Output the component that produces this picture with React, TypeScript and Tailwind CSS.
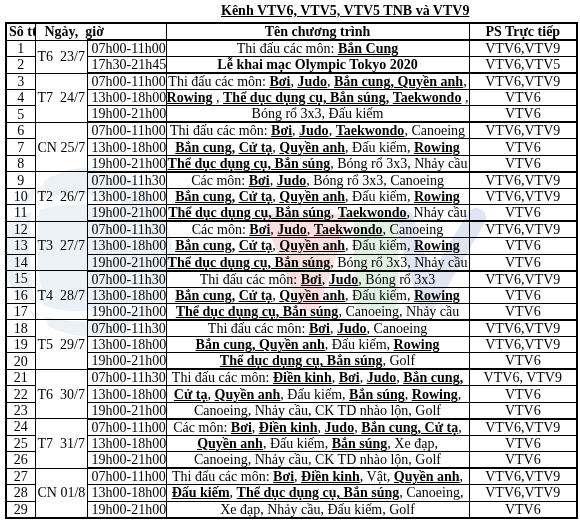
import React from 'react';

type Row = { time: string; prog: string; ps: string };

const groups: { date: string; rows: Row[] }[] = [
  {
    date: 'T6  23/7',
    rows: [
      { time: '07h00-11h00', prog: 'Thi đấu các môn: [Bắn Cung]', ps: 'VTV6,VTV9' },
      { time: '17h30-21h45', prog: '{Lễ khai mạc Olympic Tokyo 2020}', ps: 'VTV6,VTV5' },
    ],
  },
  {
    date: 'T7  24/7',
    rows: [
      { time: '07h00-11h00', prog: 'Thi đấu các môn: [Bơi], [Judo], [Bắn cung, Quyền anh],', ps: 'VTV6,VTV9' },
      { time: '13h00-18h00', prog: '[Rowing] , [Thể dục dụng cụ, Bắn súng,] [Taekwondo] ,', ps: 'VTV6' },
      { time: '19h00-21h00', prog: 'Bóng rổ 3x3, Đấu kiếm', ps: 'VTV6' },
    ],
  },
  {
    date: 'CN 25/7',
    rows: [
      { time: '07h00-11h00', prog: 'Thi đấu các môn: [Bơi], [Judo], [Taekwondo], Canoeing', ps: 'VTV6,VTV9' },
      { time: '13h00-18h00', prog: '[Bắn cung]{,} [Cử tạ], [Quyền anh], Đấu kiếm, [Rowing]', ps: 'VTV6' },
      { time: '19h00-21h00', prog: '[Thể dục dụng cụ, Bắn súng], Bóng rổ 3x3, Nhảy cầu', ps: 'VTV6' },
    ],
  },
  {
    date: 'T2  26/7',
    rows: [
      { time: '07h00-11h30', prog: 'Các môn: [Bơi], [Judo], Bóng rổ 3x3, Canoeing', ps: 'VTV6,VTV9' },
      { time: '13h00-18h00', prog: '[Bắn cung]{,} [Cử tạ], [Quyền anh], Đấu kiếm, [Rowing]', ps: 'VTV6,VTV9' },
      { time: '19h00-21h00', prog: '[Thể dục dụng cụ, Bắn súng], [Taekwondo], Nhảy cầu', ps: 'VTV6' },
    ],
  },
  {
    date: 'T3  27/7',
    rows: [
      { time: '07h00-11h30', prog: 'Các môn: [Bơi], [Judo], [Taekwondo], Canoeing', ps: 'VTV6,VTV9' },
      { time: '13h00-18h00', prog: '[Bắn cung]{,} [Cử tạ], [Quyền anh], Đấu kiếm, [Rowing]', ps: 'VTV6' },
      { time: '19h00-21h00', prog: '[Thể dục dụng cụ, Bắn súng], Bóng rổ 3x3, Nhảy cầu', ps: 'VTV6' },
    ],
  },
  {
    date: 'T4  28/7',
    rows: [
      { time: '07h00-11h30', prog: 'Thi đấu các môn: [Bơi], [Judo], Bóng rổ 3x3', ps: 'VTV6,VTV9' },
      { time: '13h00-18h00', prog: '[Bắn cung]{,} [Cử tạ], [Quyền anh], Đấu kiếm, [Rowing]', ps: 'VTV6' },
      { time: '19h00-21h00', prog: '[Thể dục dụng cụ, Bắn súng], Canoeing, Nhảy cầu', ps: 'VTV6' },
    ],
  },
  {
    date: 'T5  29/7',
    rows: [
      { time: '07h00-11h30', prog: 'Thi đấu các môn: [Bơi], [Judo], Canoeing', ps: 'VTV6,VTV9' },
      { time: '13h00-18h00', prog: '[Bắn cung, Quyền anh], Đấu kiếm, [Rowing]', ps: 'VTV6,VTV9' },
      { time: '19h00-21h00', prog: '[Thể dục dụng cụ, Bắn súng], Golf', ps: 'VTV6' },
    ],
  },
  {
    date: 'T6  30/7',
    rows: [
      { time: '07h00-11h30', prog: 'Thi đấu các môn: [Điền kinh], [Bơi], [Judo], [Bắn cung]{,}', ps: 'VTV6, VTV9' },
      { time: '13h00-18h00', prog: '[Cử tạ], [Quyền anh], Đấu kiếm, [Bắn súng], [Rowing],', ps: 'VTV6' },
      { time: '19h00-21h00', prog: 'Canoeing, Nhảy cầu, CK TD nhào lộn, Golf', ps: 'VTV6' },
    ],
  },
  {
    date: 'T7  31/7',
    rows: [
      { time: '07h00-11h00', prog: 'Các môn: [Bơi], [Điền kinh], [Judo], [Bắn cung, Cử tạ],', ps: 'VTV6,VTV9' },
      { time: '13h00-18h00', prog: '[Quyền anh], Đấu kiếm, [Bắn súng], Xe đạp,', ps: 'VTV6' },
      { time: '19h00-21h00', prog: 'Canoeing, Nhảy cầu, CK TD nhào lộn, Golf', ps: 'VTV6' },
    ],
  },
  {
    date: 'CN 01/8',
    rows: [
      { time: '07h00-11h00', prog: 'Thi đấu các môn: [Bơi], [Điền kinh], Vật, [Quyền anh],', ps: 'VTV6,VTV9' },
      { time: '13h00-18h00', prog: '[Đấu kiếm], [Thể dục dụng cụ, Bắn súng], Canoeing,', ps: 'VTV6,VTV9' },
      { time: '19h00-21h00', prog: 'Xe đạp, Nhảy cầu, Đấu kiếm, Golf', ps: 'VTV6' },
    ],
  },
];

// [..] = bold + underline, {..} = bold only
function Prog({ text }: { text: string }) {
  const parts = text.split(/(\[[^\]]*\]|\{[^}]*\})/);
  return (
    <>
      {parts.map((p, i) => {
        if (p.startsWith('[')) return <b key={i} className="underline">{p.slice(1, -1)}</b>;
        if (p.startsWith('{')) return <b key={i}>{p.slice(1, -1)}</b>;
        return <span key={i}>{p}</span>;
      })}
    </>
  );
}

function Watermark() {
  return (
    <svg
      className="absolute left-0 top-0 pointer-events-none mix-blend-multiply"
      width="580"
      height="525"
      viewBox="0 0 580 525"
    >
      <g opacity="0.35">
        <circle cx="88" cy="252" r="84" fill="#c9d8e6" />
        <path d="M10 215 Q60 190 120 205" stroke="#fff" strokeWidth="10" fill="none" />
        <path d="M20 300 Q70 330 140 305" stroke="#fff" strokeWidth="10" fill="none" />
        <path d="M40 180 Q25 255 45 330" stroke="#fff" strokeWidth="8" fill="none" />
        <path d="M262 214 L350 214 L320 304 Q310 318 298 304 Z" fill="#f1a3a3" />
        <path d="M354 216 L398 216 L398 300 Q398 310 388 310 L364 310 Q354 310 354 300 Z" fill="#a9d6a9" />
        <path d="M404 220 L428 300 L476 218" stroke="#a9b2d6" strokeWidth="20" strokeLinejoin="round" strokeLinecap="round" fill="none" />
      </g>
    </svg>
  );
}

export default function App() {
  let n = 0;
  return (
    <div
      className="relative w-[580px] h-[525px] bg-white text-black text-[14px] leading-[15px]"
      style={{ fontFamily: '"Liberation Serif", "Times New Roman", serif' }}
    >
      <div className="h-[22px] pl-[221px] pt-[3px] font-bold">
        <span className="underline">Kênh VTV6, VTV5, VTV5 TNB và VTV9</span>
      </div>
      <table className="ml-[5px] w-[571px] table-fixed border-collapse border-2 border-black">
        <colgroup>
          <col className="w-[29px]" />
          <col className="w-[52px]" />
          <col className="w-[79px]" />
          <col className="w-[303px]" />
          <col className="w-[108px]" />
        </colgroup>
        <thead>
          <tr className="h-[16px] font-bold">
            <td className="border border-black p-0 pl-[2px] whitespace-nowrap overflow-hidden">Sô tt</td>
            <td colSpan={2} className="border border-black p-0 pl-[9px] whitespace-pre">Ngày,  giờ</td>
            <td className="border border-black p-0 text-center">Tên chương trình</td>
            <td className="border border-black p-0 text-center">PS Trực tiếp</td>
          </tr>
        </thead>
        <tbody>
          {groups.map((g) =>
            g.rows.map((r, i) => {
              n += 1;
              const top = i === 0 ? 'border-t-2' : '';
              return (
                <tr key={n} className="h-[16.4px]">
                  <td className="border border-black p-0 text-center">{n}</td>
                  {i === 0 && (
                    <td
                      rowSpan={g.rows.length}
                      className="border border-black p-0 pl-[2px] whitespace-pre overflow-hidden align-middle"
                    >
                      {g.date}
                    </td>
                  )}
                  <td className={`border border-black ${top} p-0 pl-[4px] whitespace-nowrap overflow-hidden`}>
                    {r.time}
                  </td>
                  <td className={`border border-black ${top} p-0 text-center whitespace-nowrap overflow-hidden`}>
                    <Prog text={r.prog} />
                  </td>
                  <td className={`border border-black ${top} p-0 text-center whitespace-nowrap`}>{r.ps}</td>
                </tr>
              );
            })
          )}
        </tbody>
      </table>
      <Watermark />
    </div>
  );
}
